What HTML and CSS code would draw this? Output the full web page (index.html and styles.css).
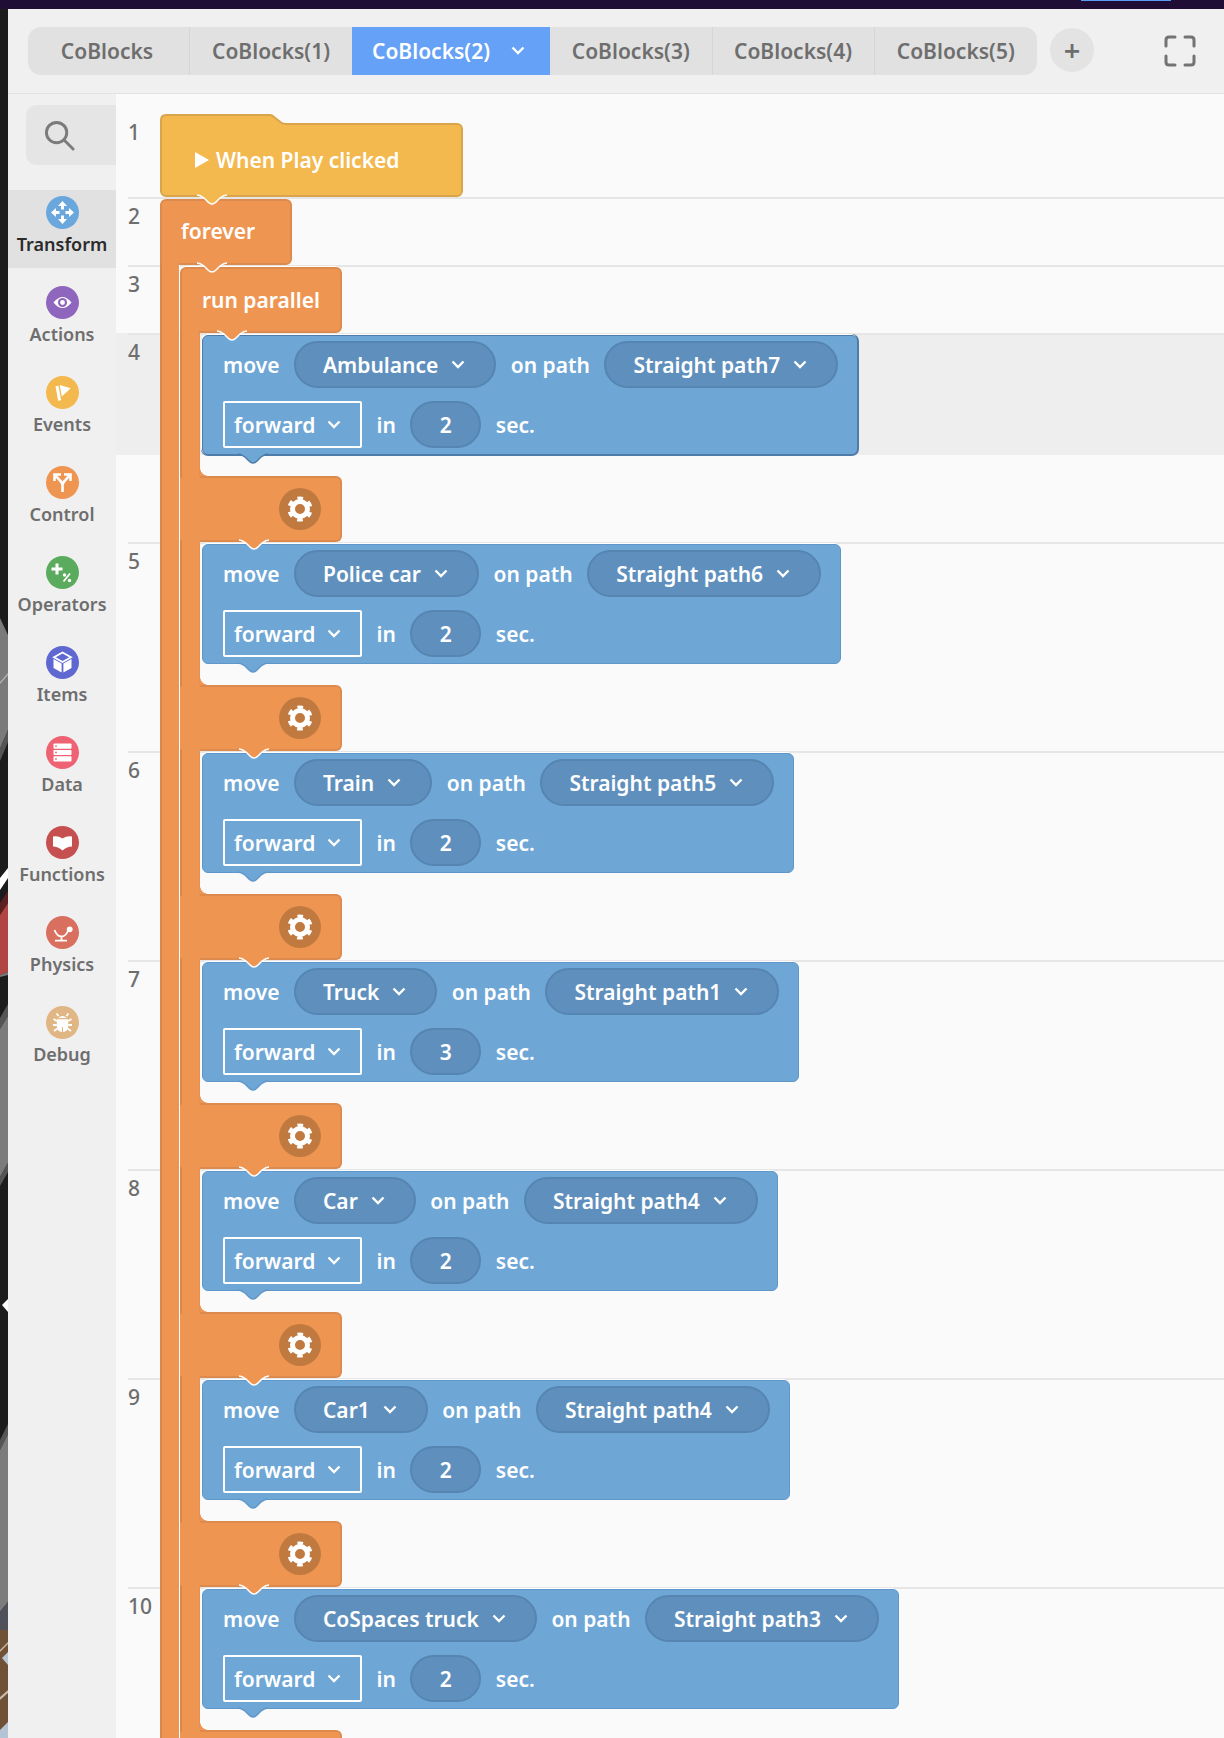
FILE: index.html
```html
<!DOCTYPE html>
<html lang="en">
<head>
<meta charset="utf-8">
<title>CoBlocks</title>
<link rel="stylesheet" href="styles.css">
</head>
<body>
<svg class="defs" width="0" height="0" aria-hidden="true">
  <defs>
    <path id="tab-shape" d="M2 0C5 0 7 1.5 9 3L13 7Q17 11 21 7L25 3C27 1.5 29 0 32 0"/>
    <polyline id="chev" points="1.5,1.5 7,7 12.5,1.5"/>
    <g id="gear">
      <circle class="gear-ring" cx="21" cy="21" r="7.5"/>
      <circle class="gear-teeth" cx="21" cy="21" r="11"/>
    </g>
  </defs>
</svg>
<div class="topbar"><span class="topbar-mark"></span></div>
<div class="app">
  <svg class="edge" viewBox="0 9 8 1729" preserveAspectRatio="none">
    <rect x="0" y="9" width="8" height="1729" fill="#1c1c1c"/>
    <polygon fill="#7a7a7a" points="0,618 8,635 8,730 0,749"/>
    <polygon fill="#555555" points="0,749 8,730 8,742 0,761"/>
    <polygon fill="#b5b5b5" points="0,682 8,673 8,675 0,684"/>
    <polygon fill="#ffffff" points="0,878 8,868 8,878 0,890"/>
    <polygon fill="#5c2020" points="0,903 8,891 8,903 0,915"/>
    <polygon fill="#b04544" points="0,915 8,903 8,972 0,975"/>
    <polygon fill="#777777" points="0,975 8,972 8,975 0,977"/>
    <polygon fill="#555555" points="0,1018 8,1004 8,1016 0,1029"/>
    <polygon fill="#7b7b7b" points="0,1029 8,1016 8,1163 0,1177"/>
    <polygon fill="#555555" points="0,1177 8,1163 8,1172 0,1186"/>
    <polygon fill="#ffffff" points="2,1305 8,1299 8,1312"/>
    <polygon fill="#555555" points="0,1440 8,1424 8,1434 0,1450"/>
    <polygon fill="#7c7c7c" points="0,1450 8,1434 8,1602 0,1612"/>
    <polygon fill="#50515a" points="0,1612 8,1602 8,1630 0,1630"/>
    <rect x="0" y="1630" width="8" height="108" fill="#6f5136"/>
    <polygon fill="#c9b9a5" points="0,1650 8,1642 8,1644 0,1652"/>
    <polygon fill="#b9c6d6" points="2,1658 8,1652 8,1665"/>
    <polygon fill="#c9b9a5" points="0,1697 8,1690 8,1693 0,1700"/>
    <polygon fill="#b5c4d5" points="0,1730 8,1722 8,1738 0,1738"/>
  </svg>
  <div class="panel">
    <header class="header">
      <nav class="tabs">
        <span class="tab">CoBlocks</span>
        <span class="tab">CoBlocks(1)</span>
        <span class="tab tab-active">CoBlocks(2)<svg class="chevron tab-chev" viewBox="0 0 14 9"><use href="#chev"/></svg></span>
        <span class="tab">CoBlocks(3)</span>
        <span class="tab">CoBlocks(4)</span>
        <span class="tab">CoBlocks(5)</span>
      </nav>
      <span class="add">+</span>
      <svg class="fullscreen" viewBox="0 0 32 32"><path d="M2 11V5Q2 2 5 2H11M21 2H27Q30 2 30 5V11M30 21V27Q30 30 27 30H21M11 30H5Q2 30 2 27V21"/></svg>
    </header>
    <div class="main">
      <aside class="sidebar">
        <div class="search"><svg viewBox="0 0 32 32"><circle cx="13" cy="13" r="10.5"/><path d="M21 21L30 30"/></svg></div>
        <ul class="cats">
          <li class="cat cat-active"><span class="cat-icon c-transform"><svg viewBox="0 0 33 33"><g id="arrow"><path d="M16.5 5L21 10H18V13.5H15V10H12Z"/></g><use href="#arrow" transform="rotate(90 16.5 16.5)"/><use href="#arrow" transform="rotate(180 16.5 16.5)"/><use href="#arrow" transform="rotate(270 16.5 16.5)"/></svg></span>Transform</li>
          <li class="cat"><span class="cat-icon c-actions"><svg viewBox="0 0 33 33"><path d="M7.5 16.5Q16.5 5.5 25.5 16.5Q16.5 27.5 7.5 16.5Z"/><circle class="ink" cx="16.5" cy="16.5" r="4.6"/><circle cx="16.5" cy="16.5" r="2.4"/></svg></span>Actions</li>
          <li class="cat"><span class="cat-icon c-events"><svg viewBox="0 0 33 33"><path class="line" d="M11 10L13.6 24.5"/><path d="M13.7 9L24.7 12.3L15.8 20.5Z"/></svg></span>Events</li>
          <li class="cat"><span class="cat-icon c-control"><svg viewBox="0 0 33 33"><path class="line mid" d="M16.5 26V19.5Q16.5 17 14.5 15L9.5 9.5M8.5 15V8.5H15M16.5 19.5Q16.5 17 18.5 15L23.5 9.5M24.5 15V8.5H18"/></svg></span>Control</li>
          <li class="cat"><span class="cat-icon c-operators"><svg viewBox="0 0 33 33"><path class="line" d="M11 7.5V18.5M5.5 13H16.5"/><path class="line thin" d="M24 17.5L17.5 25.5"/><circle cx="18.5" cy="19" r="1.7"/><circle cx="23.5" cy="24.5" r="1.7"/></svg></span>Operators</li>
          <li class="cat"><span class="cat-icon c-items"><svg viewBox="0 0 33 33"><path class="line thin" d="M16.5 6.5L25 11.3L16.5 16L8 11.3Z"/><path d="M7.5 13L15.6 17.5V26.5L7.5 22ZM25.5 13L17.4 17.5V26.5L25.5 22Z"/></svg></span>Items</li>
          <li class="cat"><span class="cat-icon c-data"><svg viewBox="0 0 33 33"><rect x="7.5" y="7.5" width="18" height="5.2" rx=".8"/><rect x="7.5" y="13.9" width="18" height="5.2" rx=".8"/><rect x="7.5" y="20.3" width="18" height="5.2" rx=".8"/><circle class="ink" cx="10" cy="10.1" r=".9"/><circle class="ink" cx="10" cy="16.5" r=".9"/><circle class="ink" cx="10" cy="22.9" r=".9"/></svg></span>Data</li>
          <li class="cat"><span class="cat-icon c-functions"><svg viewBox="0 0 33 33"><path d="M7 10.5Q12 9.5 16.5 12.5Q21 9.5 26 10.5V20.5Q21 20.5 16.5 24.5Q12 20.5 7 20.5Z"/></svg></span>Functions</li>
          <li class="cat"><span class="cat-icon c-physics"><svg viewBox="0 0 33 33"><path class="line thin" d="M8.5 14Q11 20.5 15.5 20.5Q19.5 20.5 22 15M15.5 20.5V24.5M9 24.7H21"/><circle cx="23.7" cy="13.3" r="2.9"/></svg></span>Physics</li>
          <li class="cat"><span class="cat-icon c-debug"><svg viewBox="0 0 33 33"><path d="M12 12Q16.5 8 21 12Z"/><path d="M10.8 13.2H22.2V20Q22 25.5 17 26V21H16V26Q11 25.5 10.8 20Z"/><path class="line thin" d="M12.5 10L10.5 7.5M20.5 10L22.5 7.5M10.8 15L7.5 13M10.8 19H7M11.5 22.5L8 25M22.2 15L25.5 13M22.2 19H26M21.5 22.5L25 25"/></svg></span>Debug</li>
        </ul>
      </aside>
      <section class="workspace">
        <div class="rows">
          <div class="row row-first"><span class="num">1</span></div>
          <div class="row row-short"><span class="num">2</span></div>
          <div class="row row-short"><span class="num">3</span></div>
          <div class="row row-selected"><span class="num">4</span></div>
          <div class="row"><span class="num">5</span></div>
          <div class="row"><span class="num">6</span></div>
          <div class="row"><span class="num">7</span></div>
          <div class="row"><span class="num">8</span></div>
          <div class="row"><span class="num">9</span></div>
          <div class="row"><span class="num">10</span></div>
        </div>
        <div class="blocks">
          <div class="hat">
            <svg class="hat-bump" viewBox="0 0 130 14"><path class="bump-fill" d="M1 6Q1 1 6 1H110Q112 1 114 3L121 8.5Q123 10 126 10H130V14H1Z"/><path class="bump-line" d="M1 14V6Q1 1 6 1H110Q112 1 114 3L121 8.5Q123 10 126 10H130"/></svg>
            <span class="play"></span>When Play clicked
            <svg class="notch notch-yellow" viewBox="0 0 34 11"><use href="#tab-shape"/></svg>
          </div>
          <div class="head head-forever">forever
            <svg class="notch notch-orange" viewBox="0 0 34 11"><use href="#tab-shape"/></svg>
          </div>
          <div class="bar-outer">
            <div class="head head-run">run parallel
              <svg class="notch notch-orange" viewBox="0 0 34 11"><use href="#tab-shape"/></svg>
            </div>
            <div class="bar-inner">
              <div class="branch">
                <div class="move move-selected">
                  <div class="line-a"><span>move</span><span class="pill">Ambulance<svg class="chevron" viewBox="0 0 14 9"><use href="#chev"/></svg></span><span>on path</span><span class="pill">Straight path7<svg class="chevron" viewBox="0 0 14 9"><use href="#chev"/></svg></span></div>
                  <div class="line-a"><span class="select">forward<svg class="chevron" viewBox="0 0 14 9"><use href="#chev"/></svg></span><span>in</span><span class="pill pill-num">2</span><span>sec.</span></div>
                  <svg class="notch notch-blue-sel" viewBox="0 0 34 11"><use href="#tab-shape"/></svg>
                </div>
                <div class="foot"><svg class="gear" viewBox="0 0 42 42"><use href="#gear"/></svg><svg class="notch notch-foot" viewBox="0 0 34 11"><use href="#tab-shape"/></svg></div>
              </div>
              <div class="branch">
                <div class="move">
                  <div class="line-a"><span>move</span><span class="pill">Police car<svg class="chevron" viewBox="0 0 14 9"><use href="#chev"/></svg></span><span>on path</span><span class="pill">Straight path6<svg class="chevron" viewBox="0 0 14 9"><use href="#chev"/></svg></span></div>
                  <div class="line-a"><span class="select">forward<svg class="chevron" viewBox="0 0 14 9"><use href="#chev"/></svg></span><span>in</span><span class="pill pill-num">2</span><span>sec.</span></div>
                  <svg class="notch notch-blue" viewBox="0 0 34 11"><use href="#tab-shape"/></svg>
                </div>
                <div class="foot"><svg class="gear" viewBox="0 0 42 42"><use href="#gear"/></svg><svg class="notch notch-foot" viewBox="0 0 34 11"><use href="#tab-shape"/></svg></div>
              </div>
              <div class="branch">
                <div class="move">
                  <div class="line-a"><span>move</span><span class="pill">Train<svg class="chevron" viewBox="0 0 14 9"><use href="#chev"/></svg></span><span>on path</span><span class="pill">Straight path5<svg class="chevron" viewBox="0 0 14 9"><use href="#chev"/></svg></span></div>
                  <div class="line-a"><span class="select">forward<svg class="chevron" viewBox="0 0 14 9"><use href="#chev"/></svg></span><span>in</span><span class="pill pill-num">2</span><span>sec.</span></div>
                  <svg class="notch notch-blue" viewBox="0 0 34 11"><use href="#tab-shape"/></svg>
                </div>
                <div class="foot"><svg class="gear" viewBox="0 0 42 42"><use href="#gear"/></svg><svg class="notch notch-foot" viewBox="0 0 34 11"><use href="#tab-shape"/></svg></div>
              </div>
              <div class="branch">
                <div class="move">
                  <div class="line-a"><span>move</span><span class="pill">Truck<svg class="chevron" viewBox="0 0 14 9"><use href="#chev"/></svg></span><span>on path</span><span class="pill">Straight path1<svg class="chevron" viewBox="0 0 14 9"><use href="#chev"/></svg></span></div>
                  <div class="line-a"><span class="select">forward<svg class="chevron" viewBox="0 0 14 9"><use href="#chev"/></svg></span><span>in</span><span class="pill pill-num">3</span><span>sec.</span></div>
                  <svg class="notch notch-blue" viewBox="0 0 34 11"><use href="#tab-shape"/></svg>
                </div>
                <div class="foot"><svg class="gear" viewBox="0 0 42 42"><use href="#gear"/></svg><svg class="notch notch-foot" viewBox="0 0 34 11"><use href="#tab-shape"/></svg></div>
              </div>
              <div class="branch">
                <div class="move">
                  <div class="line-a"><span>move</span><span class="pill">Car<svg class="chevron" viewBox="0 0 14 9"><use href="#chev"/></svg></span><span>on path</span><span class="pill">Straight path4<svg class="chevron" viewBox="0 0 14 9"><use href="#chev"/></svg></span></div>
                  <div class="line-a"><span class="select">forward<svg class="chevron" viewBox="0 0 14 9"><use href="#chev"/></svg></span><span>in</span><span class="pill pill-num">2</span><span>sec.</span></div>
                  <svg class="notch notch-blue" viewBox="0 0 34 11"><use href="#tab-shape"/></svg>
                </div>
                <div class="foot"><svg class="gear" viewBox="0 0 42 42"><use href="#gear"/></svg><svg class="notch notch-foot" viewBox="0 0 34 11"><use href="#tab-shape"/></svg></div>
              </div>
              <div class="branch">
                <div class="move">
                  <div class="line-a"><span>move</span><span class="pill">Car1<svg class="chevron" viewBox="0 0 14 9"><use href="#chev"/></svg></span><span>on path</span><span class="pill">Straight path4<svg class="chevron" viewBox="0 0 14 9"><use href="#chev"/></svg></span></div>
                  <div class="line-a"><span class="select">forward<svg class="chevron" viewBox="0 0 14 9"><use href="#chev"/></svg></span><span>in</span><span class="pill pill-num">2</span><span>sec.</span></div>
                  <svg class="notch notch-blue" viewBox="0 0 34 11"><use href="#tab-shape"/></svg>
                </div>
                <div class="foot"><svg class="gear" viewBox="0 0 42 42"><use href="#gear"/></svg><svg class="notch notch-foot" viewBox="0 0 34 11"><use href="#tab-shape"/></svg></div>
              </div>
              <div class="branch">
                <div class="move">
                  <div class="line-a"><span>move</span><span class="pill">CoSpaces truck<svg class="chevron" viewBox="0 0 14 9"><use href="#chev"/></svg></span><span>on path</span><span class="pill">Straight path3<svg class="chevron" viewBox="0 0 14 9"><use href="#chev"/></svg></span></div>
                  <div class="line-a"><span class="select">forward<svg class="chevron" viewBox="0 0 14 9"><use href="#chev"/></svg></span><span>in</span><span class="pill pill-num">2</span><span>sec.</span></div>
                  <svg class="notch notch-blue" viewBox="0 0 34 11"><use href="#tab-shape"/></svg>
                </div>
                <div class="foot"></div>
              </div>
            </div>
          </div>
        </div>
      </section>
    </div>
  </div>
</div>
</body>
</html>
```
FILE: styles.css
```css
* { box-sizing: border-box; }
html, body { margin: 0; padding: 0; height: 1738px; overflow: hidden; }
body { font-family: "Noto Sans", "Open Sans", sans-serif; font-weight: 600; font-size: 21px; color: #6e6e6e; background: #1c1c1c; }
.defs { display: block; height: 0; }

.topbar { height: 9px; background: #1f0d36; display: flex; justify-content: flex-end; padding-right: 53px; }
.topbar-mark { width: 90px; height: 1px; background: #5a9cf5; }

.app { display: flex; height: 1729px; }
.edge { width: 8px; height: 1729px; flex: none; display: block; }
.panel { flex: 1; min-width: 0; display: flex; flex-direction: column; }

.header { height: 85px; flex: none; display: flex; align-items: flex-start; background: #f0f0f0; border-bottom: 1px solid #e3e3e3; padding: 18px 0 0 20px; }
.tabs { display: flex; height: 48px; width: 1009px; background: #e1e1e1; border-radius: 13px; overflow: hidden; }
.tab { flex: 1 1 162px; display: flex; align-items: center; justify-content: center; white-space: nowrap; border-left: 1px solid #d6d6d6; padding-bottom: 1px; }
.tab:nth-child(1) { flex: 0 0 161px; border-left: 0; padding-right: 3px; }
.tab:nth-child(2) { flex: 0 0 163px; }
.tab:nth-child(4) { flex: 0 0 161.5px; border-left: 0; }
.tab:nth-child(5) { flex: 0 0 162px; }
.tab-active { flex: 0 0 198px; background: #64a1f7; color: #fff; justify-content: flex-start; padding-left: 20px; border-left: 0; }
.tab-chev { margin-left: 21px; }
.add { width: 44px; height: 44px; margin: 1px 0 0 13px; border-radius: 50%; background: #e3e3e3; display: flex; align-items: center; justify-content: center; font-size: 29px; line-height: 1; color: #6e6e6e; padding-bottom: 2px; }
.fullscreen { width: 32px; height: 32px; margin: 8px 0 0 70px; fill: none; stroke: #737373; stroke-width: 3; stroke-linecap: round; }

.main { flex: 1; display: flex; min-height: 0; }
.sidebar { width: 108px; flex: none; background: #f0f0f0; padding-top: 11px; }
.search { margin-left: 18px; height: 60px; background: #e5e5e5; border-radius: 10px 0 0 10px; display: flex; align-items: center; padding-left: 18px; }
.search svg { width: 31px; height: 31px; fill: none; stroke: #7b7b7b; stroke-width: 3; stroke-linecap: round; }
.cats { list-style: none; margin: 25px 0 0; padding: 0; display: flex; flex-direction: column; gap: 12px; }
.cat { height: 78px; padding-top: 6px; display: flex; flex-direction: column; align-items: center; font-size: 18px; line-height: 26px; gap: 2px; white-space: nowrap; }
.cat-active { background: #e1e1e1; color: #2b2b2b; }
.cat-icon { width: 33px; height: 33px; border-radius: 50%; display: block; flex: none; }
.cat-icon svg { display: block; width: 33px; height: 33px; fill: #fff; }
.cat-icon .line { fill: none; stroke: #fff; stroke-width: 3; }
.cat-icon .mid { stroke-width: 2.6; }
.cat-icon .thin { stroke-width: 1.8; }
.c-transform { background: #6aa7dc; }
.c-actions { background: #8f66bd; color: #8f66bd; }
.c-events { background: #f3b84e; }
.c-control { background: #ef9552; }
.c-operators { background: #5bab5e; }
.c-items { background: #5e68d0; }
.c-data { background: #ef6273; color: #ef6273; }
.c-functions { background: #c65050; }
.c-physics { background: #d9705f; }
.c-debug { background: #e1b685; }
.cat-icon .ink { fill: currentColor; }

.workspace { flex: 1; min-width: 0; display: grid; background: #fafafa; overflow: hidden; }
.rows, .blocks { grid-area: 1 / 1; min-width: 0; }

.row { height: 209px; padding-left: 12px; }
.row .num { display: block; height: 100%; border-top: 2px solid #e6e6e6; padding-top: 3px; line-height: 28px; font-weight: 500; }
.row-first { height: 103px; }
.row-first .num { border-top: 0; padding-top: 24px; }
.row-short { height: 68px; }
.row-selected { background: linear-gradient(#eeeeee, #eeeeee) 0 0 / 100% 122px no-repeat; }

.blocks { padding: 20px 0 0 44px; color: #fff; position: relative; }
.notch { position: absolute; left: 33px; top: 100%; width: 34px; height: 11px; overflow: visible; z-index: 2; stroke-width: 1.5; }
.notch-yellow { fill: #f3b84e; stroke: #fff; }
.notch-orange, .notch-foot { fill: #ef9552; stroke: #fff; }
.notch-blue { fill: #6ea6d6; stroke: #6097cb; }
.notch-blue-sel { fill: #6ea6d6; stroke: #4f7ba8; }

.hat { position: relative; width: 303px; height: 74px; margin-top: 9px; background: #f3b84e; border: 2px solid #d9a54c; border-radius: 0 6px 6px 6px; display: flex; align-items: center; padding: 0 0 0 33px; white-space: nowrap; }
.hat-bump { position: absolute; left: -2px; top: -11px; width: 130px; height: 14px; stroke-width: 2; overflow: visible; }
.bump-fill { fill: #f3b84e; }
.bump-line { fill: none; stroke: #d9a54c; }
.play { width: 0; height: 0; border-left: 14px solid #fff; border-top: 8.5px solid transparent; border-bottom: 8.5px solid transparent; margin-right: 7px; }

.head { position: relative; height: 66px; background: #ef9552; border: 2px solid #dd8a4e; border-radius: 6px; display: flex; align-items: center; padding-bottom: 2px; }
.head::after { content: ""; position: absolute; left: 0; bottom: -2px; width: 17px; height: 2px; background: #ef9552; }
.head-forever { width: 132px; margin-top: 2px; padding-left: 19px; border-bottom-left-radius: 0; }
.head-run { width: 162px; padding-left: 20px; padding-bottom: 0; box-shadow: -1px -1px 0 #fff; border-bottom-left-radius: 0; }
.bar-outer { padding: 2px 0 0 20px; background: linear-gradient(to right, #d9874b 0 2px, #ef9552 2px 19px, #fff 19px 20px) 0 0 / 20px 100% no-repeat; }
.bar-inner { padding-top: 2px; background: linear-gradient(to right, #d9874b 0 2px, #ef9552 2px 19px, #e79050 19px 20px) 0 0 / 20px 100% no-repeat; }

.branch { display: flex; flex-direction: column; align-items: flex-start; }
.move { position: relative; margin-left: 22px; padding: 5px 19px 6px 20px; width: max-content; background: #6ea6d6; border: 1px solid #6097cb; border-radius: 6px; box-shadow: -1px -1px 0 #fff; display: flex; flex-direction: column; gap: 13px; }
.move-selected { border: 1px solid #4f7ba8; box-shadow: -1px -1px 0 #fff, 0 0 0 1px #4f7ba8; }
.line-a { display: flex; align-items: center; gap: 14.5px; height: 47px; white-space: nowrap; }
.pill { height: 47px; padding: 0 29px 0 27px; border-radius: 24px; background: #5f90bd; border: 2px solid #5585b0; display: flex; align-items: center; gap: 13px; }
.pill-num { width: 71px; padding: 0; justify-content: center; }
.select { height: 47px; width: 139px; padding-left: 9px; border: 2px solid #fff; border-radius: 2px; display: flex; align-items: center; gap: 12px; }
.chevron { width: 14px; height: 9px; fill: none; stroke: #fff; stroke-width: 2.4; flex: none; }

.foot { position: relative; width: 162px; height: 66px; margin: 21px 0 2px; background: #ef9552; border: 2px solid #dd8a4e; border-left: 0; border-top-right-radius: 6px; border-bottom-right-radius: 6px; display: flex; align-items: center; justify-content: flex-end; padding-right: 19px; }
.foot::before { content: ""; position: absolute; left: 20px; top: -10px; width: 8px; height: 8px; background: radial-gradient(circle at 100% 0, transparent 7.5px, #ef9552 8px); }
.foot::after { content: ""; position: absolute; left: 2px; top: -2px; bottom: -2px; width: 18px; background: #ef9552; }
.foot .notch { left: 57px; }
.gear { width: 42px; height: 42px; border-radius: 50%; background: #c07a40; fill: none; stroke: #fff; }
.gear-ring { stroke-width: 5; }
.gear-teeth { stroke-width: 3.2; stroke-dasharray: 5.5 6; stroke-dashoffset: 2.75; transform: rotate(30deg); transform-origin: 21px 21px; }
```
